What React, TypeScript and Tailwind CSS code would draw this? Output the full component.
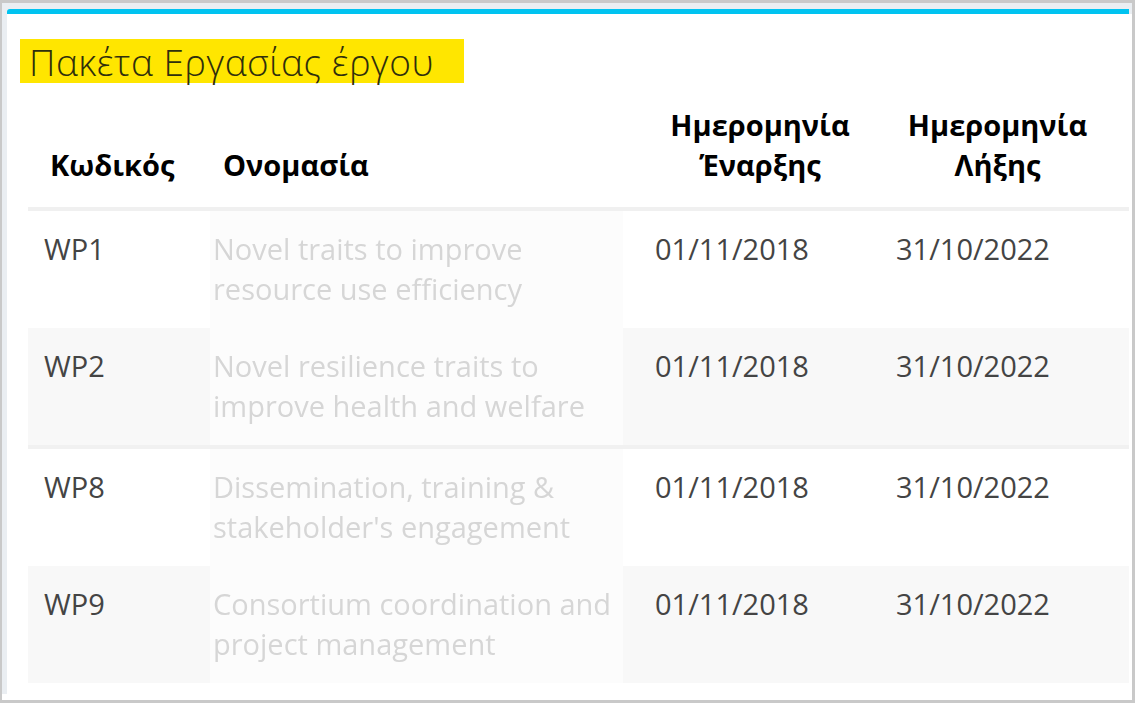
const rows = [
  { code: "WP1", name: ["Novel traits to improve", "resource use efficiency"], start: "01/11/2018", end: "31/10/2022" },
  { code: "WP2", name: ["Novel resilience traits to", "improve health and welfare"], start: "01/11/2018", end: "31/10/2022" },
  { code: "WP8", name: ["Dissemination, training &", "stakeholder's engagement"], start: "01/11/2018", end: "31/10/2022" },
  { code: "WP9", name: ["Consortium coordination and", "project management"], start: "01/11/2018", end: "31/10/2022" },
];

export default function App() {
  return (
    <div className="w-[1135px] h-[703px] bg-[#c9c9c9] pt-[3px] pl-[2px] pr-[3px] pb-[3px] font-['Open_Sans',sans-serif]">
      <div className="h-full bg-white pb-[6px]">
        <div className="h-full bg-[#eaeef2] pt-[6px] pl-[5px] flex flex-col">
          <div className="h-[5px] mr-[3px] bg-[#00c3f0] rounded-tl-[3px]" />
          <div className="flex-1 bg-white pl-[13px] pt-[25px]">
            {/* Title */}
            <div className="w-[444px] h-[44px] bg-[#ffe600] pl-[9px] flex items-center">
              <h2 className="text-[37px] font-light leading-none tracking-[0.5px] text-[#2f2f0c]">Πακέτα Εργασίας έργου</h2>
            </div>

            <table className="mt-[12px] ml-[8px] w-[1101px] table-fixed border-collapse text-[29px] leading-[40px]">
              <colgroup>
                <col className="w-[172px]" />
                <col className="w-[440px]" />
                <col className="w-[240px]" />
                <col className="w-[249px]" />
              </colgroup>
              <thead>
                <tr className="border-b-[4px] border-[#f0f0f0] text-black font-semibold">
                  <th className="align-bottom text-left pl-[22px] pb-[22px]">Κωδικός</th>
                  <th className="align-bottom text-left pl-[23px] pb-[22px]">Ονομασία</th>
                  <th className="align-bottom text-center pt-[10px] pb-[22px]">
                    Ημερομηνία
                    <br />
                    Έναρξης
                  </th>
                  <th className="align-bottom text-center pt-[10px] pr-[14px] pb-[22px]">
                    Ημερομηνία
                    <br />
                    Λήξης
                  </th>
                </tr>
              </thead>
              <tbody className="text-[#444]">
                {rows.map((r, i) => (
                  <tr
                    key={r.code}
                    className={
                      i === 1
                        ? "bg-[#f8f8f8] border-b-[4px] border-[#f1f1f1]"
                        : i === 3
                          ? "bg-[#f8f8f8]"
                          : "bg-white"
                    }
                  >
                    <td className="align-top pl-[16px] py-[18px]">{r.code}</td>
                    <td className="align-top p-0 h-[117px]">
                      <div className="ml-[10px] w-[413px] h-[117px] bg-[#fcfcfc] pl-[3px] pt-[18px]">
                        <div className="text-[#d6d6d6] blur-[0.6px] whitespace-nowrap">
                          {r.name[0]}
                          <br />
                          {r.name[1]}
                        </div>
                      </div>
                    </td>
                    <td className="align-top pl-[15px] py-[18px]">{r.start}</td>
                    <td className="align-top pl-[16px] py-[18px]">{r.end}</td>
                  </tr>
                ))}
              </tbody>
            </table>
          </div>
        </div>
      </div>
    </div>
  );
}
